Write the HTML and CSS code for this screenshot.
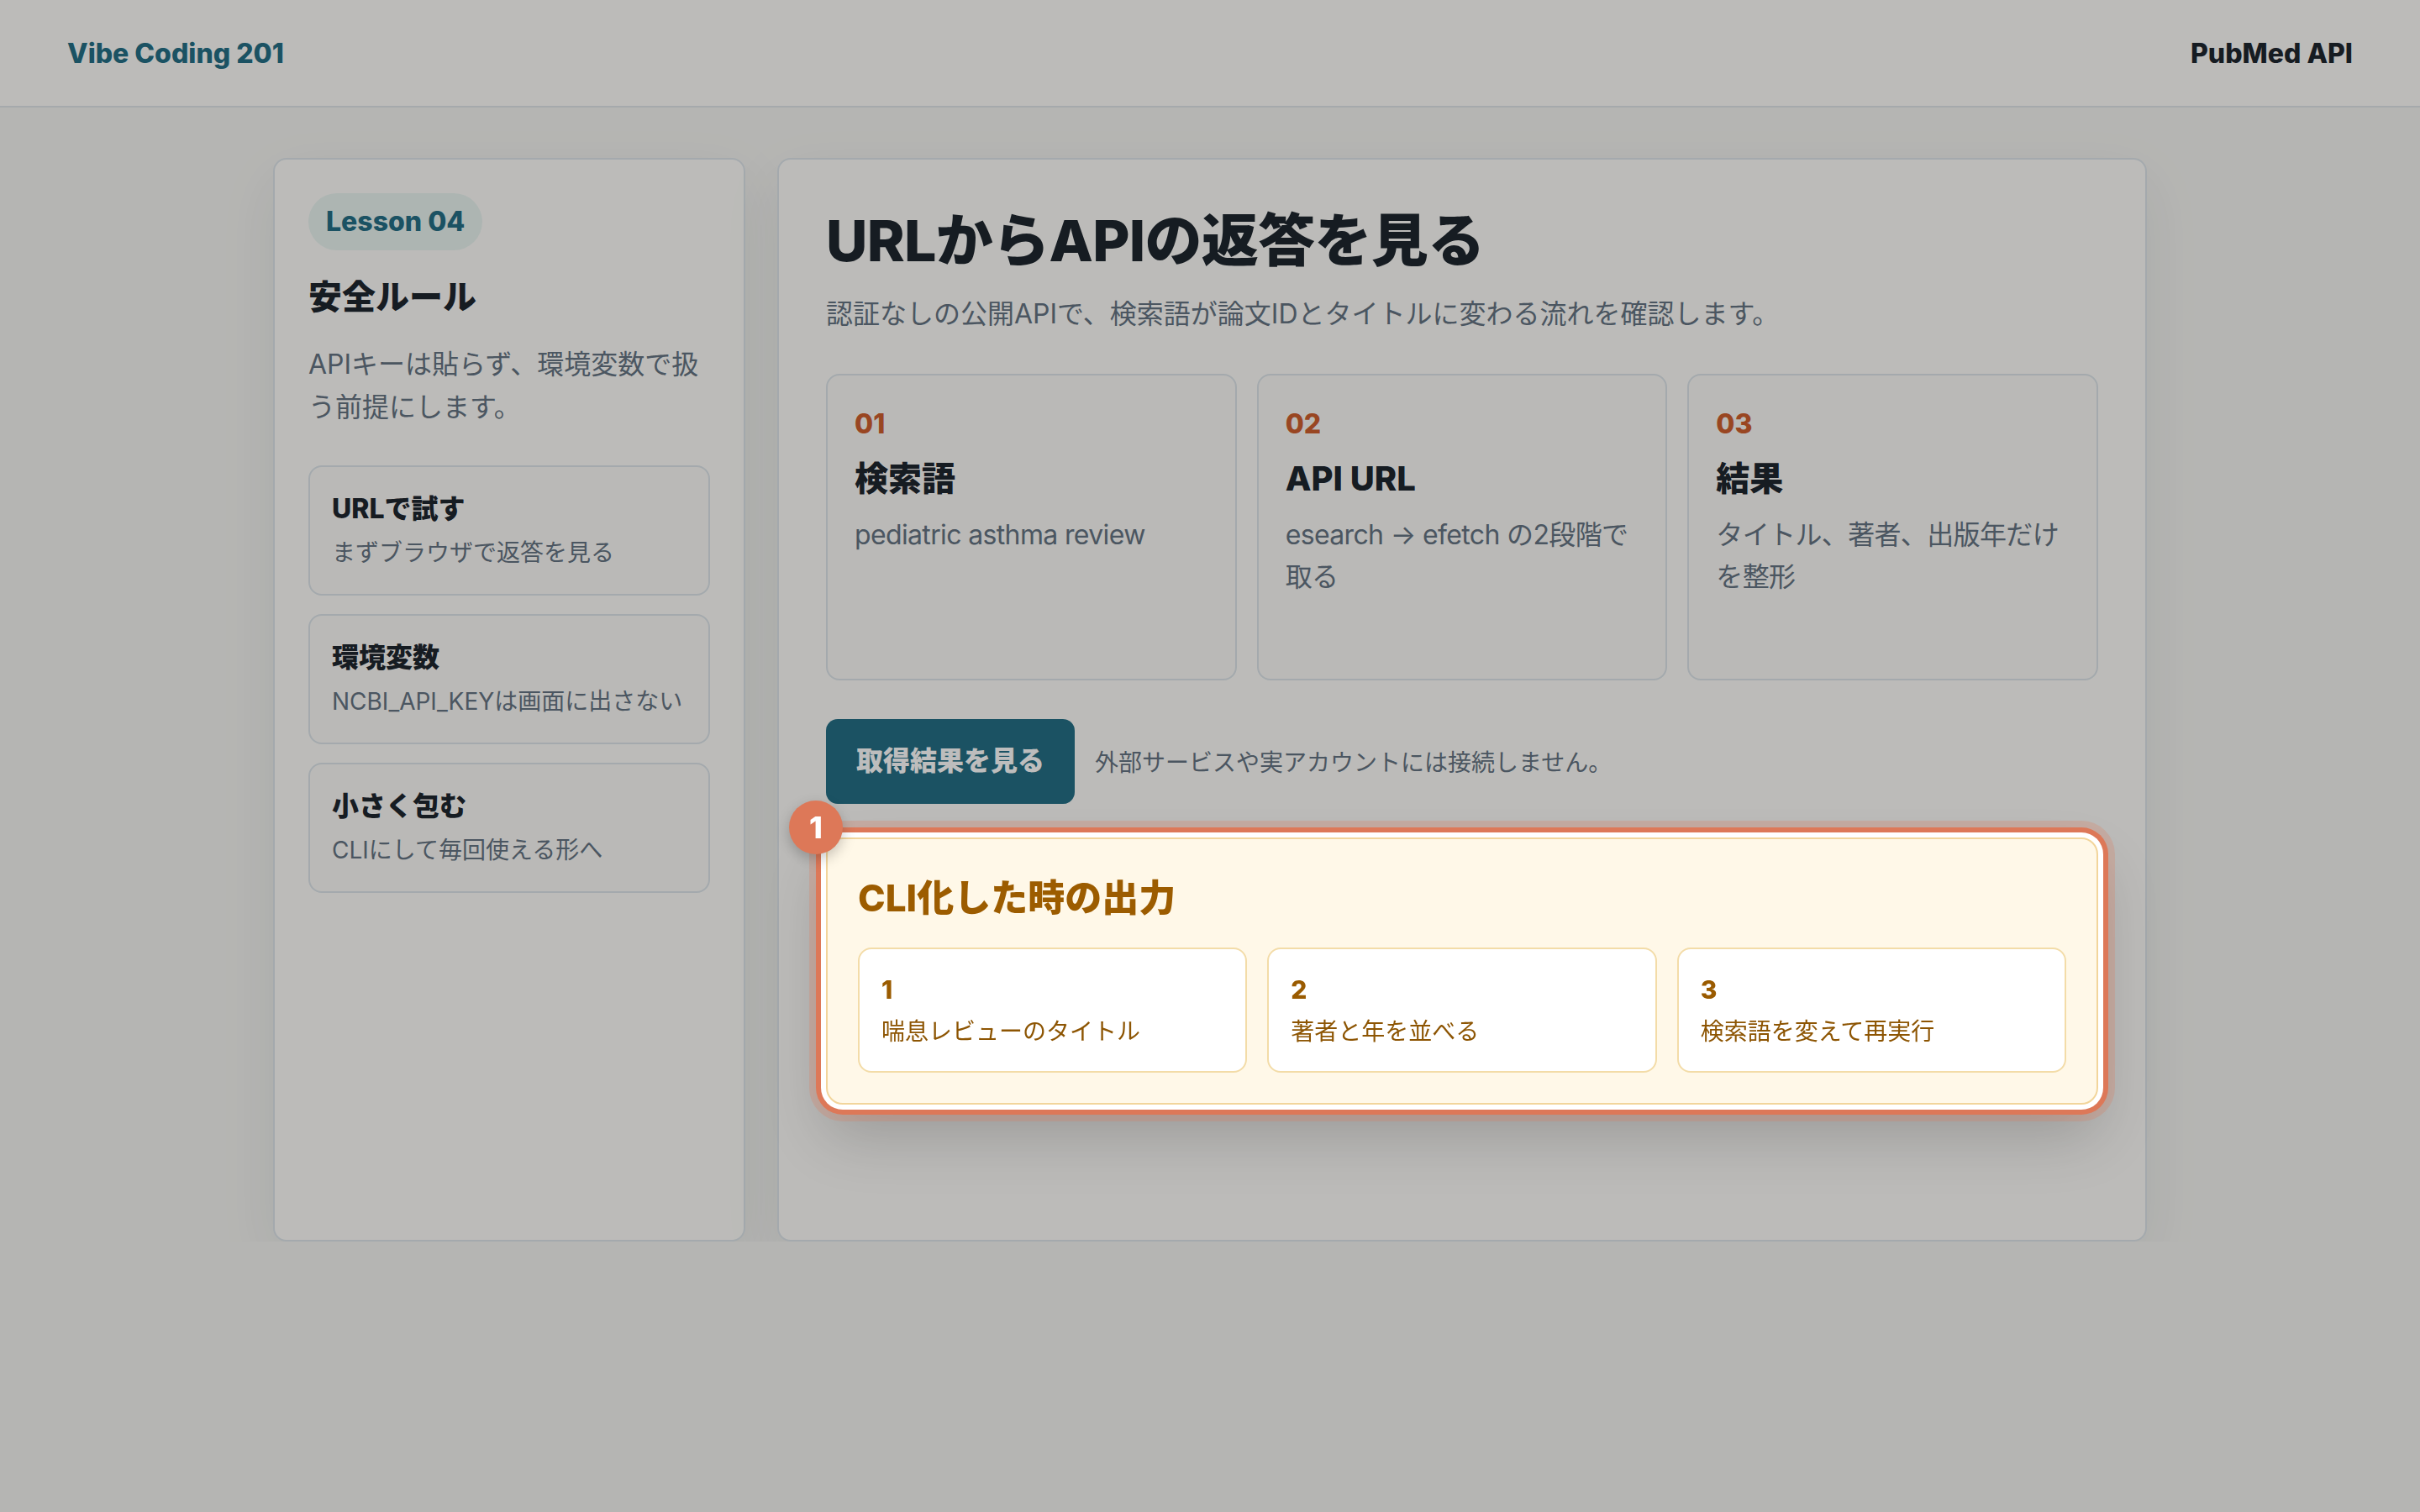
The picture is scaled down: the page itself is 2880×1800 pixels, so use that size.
FILE: index.html
```html
<!DOCTYPE html>
<html lang="ja">
<head>
<meta charset="utf-8">
<title>Vibe Coding 201 — PubMed API</title>
<link rel="stylesheet" href="styles.css">
</head>
<body>
<header class="topbar">
  <div class="brand">Vibe Coding 201</div>
  <div class="topic">PubMed API</div>
</header>

<main class="layout">
  <aside class="card side">
    <span class="pill">Lesson 04</span>
    <h2 class="side-title">安全ルール</h2>
    <p class="side-text">APIキーは貼らず、環境変数で扱う前提にします。</p>
    <ul class="rules">
      <li class="rule">
        <span class="rule-title">URLで試す</span>
        <span class="rule-text">まずブラウザで返答を見る</span>
      </li>
      <li class="rule">
        <span class="rule-title">環境変数</span>
        <span class="rule-text">NCBI_API_KEYは画面に出さない</span>
      </li>
      <li class="rule">
        <span class="rule-title">小さく包む</span>
        <span class="rule-text">CLIにして毎回使える形へ</span>
      </li>
    </ul>
  </aside>

  <section class="card main">
    <h1 class="title">URLからAPIの返答を見る</h1>
    <p class="lead">認証なしの公開APIで、検索語が論文IDとタイトルに変わる流れを確認します。</p>

    <div class="steps">
      <div class="step">
        <div class="step-num">01</div>
        <h3 class="step-title">検索語</h3>
        <p class="step-text">pediatric asthma review</p>
      </div>
      <div class="step">
        <div class="step-num">02</div>
        <h3 class="step-title">API URL</h3>
        <p class="step-text">esearch → efetch の2段階で取る</p>
      </div>
      <div class="step">
        <div class="step-num">03</div>
        <h3 class="step-title">結果</h3>
        <p class="step-text">タイトル、著者、出版年だけを整形</p>
      </div>
    </div>

    <div class="actions">
      <button class="btn" type="button">取得結果を見る</button>
      <span class="note">外部サービスや実アカウントには接続しません。</span>
    </div>

    <div class="result">
      <span class="marker">1</span>
      <h3 class="result-title">CLI化した時の出力</h3>
      <div class="outputs">
        <div class="output">
          <div class="output-num">1</div>
          <div class="output-text">喘息レビューのタイトル</div>
        </div>
        <div class="output">
          <div class="output-num">2</div>
          <div class="output-text">著者と年を並べる</div>
        </div>
        <div class="output">
          <div class="output-num">3</div>
          <div class="output-text">検索語を変えて再実行</div>
        </div>
      </div>
    </div>
  </section>
</main>

<div class="dim"></div>
</body>
</html>
```

FILE: styles.css
```css
* {
  box-sizing: border-box;
}

html {
  zoom: 2;
}

body {
  margin: 0;
  font-family: Inter, "Noto Sans CJK JP", "Noto Sans", sans-serif;
  background: #f5f5f2;
  color: #1e262e;
}

/* ---------- top bar ---------- */
.topbar {
  height: 64px;
  display: flex;
  align-items: center;
  justify-content: space-between;
  padding: 0 40px;
  background: #fefdfa;
  border-bottom: 1px solid #dfe5e9;
}

.brand {
  font-size: 16px;
  font-weight: 800;
  color: #256f86;
}

.topic {
  font-size: 16px;
  font-weight: 800;
  color: #1e262e;
}

/* ---------- layout ---------- */
.layout {
  width: 1115px;
  margin: 0 auto;
  padding-top: 30px;
  display: grid;
  grid-template-columns: 281px 1fr;
  gap: 19px;
}

.card {
  min-height: 645px;
  background: #fefdfa;
  border: 1px solid #dde5ea;
  border-radius: 8px;
  box-shadow: 0 12px 36px rgba(30, 40, 50, 0.07);
}

/* ---------- side ---------- */
.side {
  padding: 20px;
}

.pill {
  display: inline-block;
  padding: 7px 10.5px;
  border-radius: 999px;
  background: #eaf4f1;
  color: #256f86;
  font-size: 16px;
  line-height: 20px;
  font-weight: 800;
}

.side-title {
  margin: 14px 0 0;
  font-size: 20px;
  line-height: 28px;
  font-weight: 800;
}

.side-text {
  margin: 13px 0 0;
  font-size: 16px;
  line-height: 1.6;
  color: #667483;
}

.rules {
  list-style: none;
  margin: 22px 0 0;
  padding: 0;
  display: flex;
  flex-direction: column;
  gap: 11px;
}

.rule {
  padding: 13px;
  border: 1px solid #dde5ea;
  border-radius: 8px;
  background: #fbfaf7;
}

.rule-title {
  display: block;
  font-size: 16px;
  line-height: 24px;
  font-weight: 800;
}

.rule-text {
  display: block;
  margin-top: 3px;
  font-size: 14px;
  line-height: 22.4px;
  color: #667483;
}

/* ---------- main ---------- */
.main {
  padding: 28px;
}

.title {
  margin: 0;
  font-size: 34px;
  line-height: 1.2;
  font-weight: 800;
  letter-spacing: -0.01em;
}

.lead {
  margin: 10px 0 0;
  font-size: 16px;
  line-height: 1.6;
  color: #667483;
}

.steps {
  margin-top: 23px;
  display: grid;
  grid-template-columns: repeat(3, 1fr);
  gap: 12px;
}

.step {
  min-height: 182.5px;
  padding: 16px;
  border: 1px solid #dde5ea;
  border-radius: 8px;
  background: #fbfaf7;
}

.step-num {
  font-size: 16px;
  line-height: 25.6px;
  font-weight: 800;
  color: #cf5f2e;
}

.step-title {
  margin: 6px 0 0;
  font-size: 20px;
  line-height: 28px;
  font-weight: 800;
}

.step-text {
  margin: 7px 0 0;
  font-size: 16px;
  line-height: 24.8px;
  letter-spacing: -0.02em;
  color: #667483;
}

.actions {
  margin-top: 23px;
  display: flex;
  align-items: center;
  gap: 12px;
}

.btn {
  border: 0;
  border-radius: 7px;
  padding: 14px 18px;
  background: #256f86;
  color: #fff;
  font-family: inherit;
  font-size: 16px;
  line-height: 22.4px;
  font-weight: 800;
}

.note {
  font-size: 14px;
  color: #667483;
}

/* ---------- spotlighted result ---------- */
.result {
  position: relative;
  z-index: 20;
  margin-top: 20px;
  padding: 18px;
  background: #fff8e8;
  border: 1px solid #f2d59b;
  border-radius: 10px;
  box-shadow:
    0 0 0 3px #ffffff,
    0 0 0 6px #dd7858,
    0 0 0 10px rgba(221, 120, 88, 0.25),
    0 18px 36px rgba(0, 0, 0, 0.18);
}

.marker {
  position: absolute;
  top: -23px;
  left: -23px;
  width: 32px;
  height: 32px;
  border-radius: 50%;
  background: #dd7858;
  color: #fff;
  font-size: 18px;
  font-weight: 800;
  display: flex;
  align-items: center;
  justify-content: center;
  box-shadow: 0 3px 8px rgba(0, 0, 0, 0.22);
}

.result-title {
  margin: 0;
  font-size: 22px;
  line-height: 34px;
  font-weight: 800;
  color: #9c5c00;
}

.outputs {
  margin-top: 12.5px;
  display: grid;
  grid-template-columns: repeat(3, 1fr);
  gap: 12px;
}

.output {
  padding: 13px;
  background: #fff;
  border: 1px solid #f3dca8;
  border-radius: 8px;
}

.output-num {
  font-size: 15px;
  line-height: 22.5px;
  font-weight: 800;
  color: #9a5b00;
}

.output-text {
  margin-top: 3px;
  font-size: 14px;
  line-height: 21px;
  color: #8d5503;
}

/* ---------- dimming overlay ---------- */
.dim {
  position: fixed;
  inset: 0;
  z-index: 10;
  background: rgba(0, 0, 0, 0.26);
}
```
